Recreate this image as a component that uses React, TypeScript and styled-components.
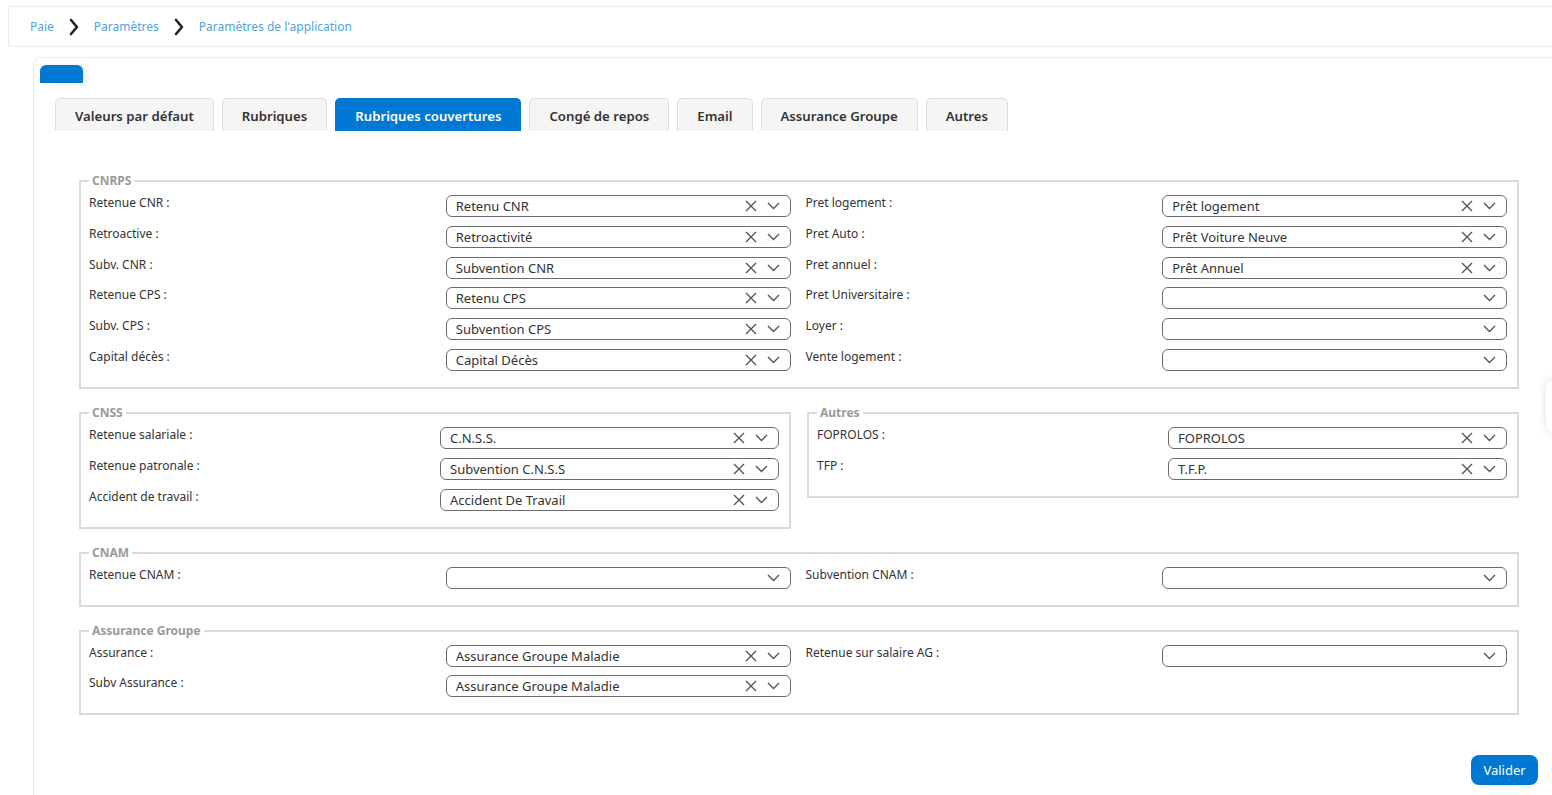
import styled, { createGlobalStyle } from "styled-components";

const GlobalStyle = createGlobalStyle`
  html, body {
    margin: 0;
    padding: 0;
    background: #ffffff;
    overflow: hidden;
  }
  body {
    font-family: "Segoe UI", "Noto Sans", "Open Sans", sans-serif;
    color: #333333;
  }
  * {
    box-sizing: border-box;
  }
`;

type Field = { label: string; value?: string };

const tabs = [
  "Valeurs par défaut",
  "Rubriques",
  "Rubriques couvertures",
  "Congé de repos",
  "Email",
  "Assurance Groupe",
  "Autres",
];

const cnrpsLeft: Field[] = [
  { label: "Retenue CNR :", value: "Retenu CNR" },
  { label: "Retroactive :", value: "Retroactivité" },
  { label: "Subv. CNR :", value: "Subvention CNR" },
  { label: "Retenue CPS :", value: "Retenu CPS" },
  { label: "Subv. CPS :", value: "Subvention CPS" },
  { label: "Capital décès :", value: "Capital Décès" },
];

const cnrpsRight: Field[] = [
  { label: "Pret logement :", value: "Prêt logement" },
  { label: "Pret Auto :", value: "Prêt Voiture Neuve" },
  { label: "Pret annuel :", value: "Prêt Annuel" },
  { label: "Pret Universitaire :" },
  { label: "Loyer :" },
  { label: "Vente logement :" },
];

const cnss: Field[] = [
  { label: "Retenue salariale :", value: "C.N.S.S." },
  { label: "Retenue patronale :", value: "Subvention C.N.S.S" },
  { label: "Accident de travail :", value: "Accident De Travail" },
];

const autres: Field[] = [
  { label: "FOPROLOS :", value: "FOPROLOS" },
  { label: "TFP :", value: "T.F.P." },
];

const ChevronRight = () => (
  <svg width="12" height="18" viewBox="0 0 12 18">
    <polyline
      points="3,2 9,9 3,16"
      fill="none"
      stroke="#222"
      strokeWidth="2.6"
      strokeLinecap="round"
      strokeLinejoin="round"
    />
  </svg>
);

const ClearIcon = () => (
  <svg width="12" height="12" viewBox="0 0 12 12">
    <path d="M1 1 L11 11 M11 1 L1 11" stroke="#555" strokeWidth="1.4" fill="none" />
  </svg>
);

const CaretIcon = () => (
  <svg width="13" height="8" viewBox="0 0 13 8">
    <polyline points="1,1 6.5,6.5 12,1" fill="none" stroke="#555" strokeWidth="1.4" />
  </svg>
);

const Select = ({ value }: { value?: string }) => (
  <SelectBox>
    <SelectValue>{value}</SelectValue>
    {value && (
      <IconSlot>
        <ClearIcon />
      </IconSlot>
    )}
    <IconSlot>
      <CaretIcon />
    </IconSlot>
  </SelectBox>
);

const FieldList = ({ fields }: { fields: Field[] }) => (
  <Column>
    {fields.map((f) => (
      <Row key={f.label}>
        <Label>{f.label}</Label>
        <Select value={f.value} />
      </Row>
    ))}
  </Column>
);

const App = () => {
  return (
    <Page>
      <GlobalStyle />
      <Breadcrumb>
        <Crumb>Paie</Crumb>
        <ChevronRight />
        <Crumb>Paramètres</Crumb>
        <ChevronRight />
        <Crumb>Paramètres de l'application</Crumb>
      </Breadcrumb>

      <Card>
        <MiniTab />
        <Tabs>
          {tabs.map((t) => (
            <Tab key={t} $active={t === "Rubriques couvertures"}>
              {t}
            </Tab>
          ))}
        </Tabs>

        <Content>
          <Fieldset>
            <Legend>CNRPS</Legend>
            <Halves>
              <FieldList fields={cnrpsLeft} />
              <FieldList fields={cnrpsRight} />
            </Halves>
          </Fieldset>

          <SideBySide>
            <Fieldset>
              <Legend>CNSS</Legend>
              <FieldList fields={cnss} />
            </Fieldset>
            <Fieldset>
              <Legend>Autres</Legend>
              <FieldList fields={autres} />
            </Fieldset>
          </SideBySide>

          <Fieldset>
            <Legend>CNAM</Legend>
            <Halves>
              <FieldList fields={[{ label: "Retenue CNAM :" }]} />
              <FieldList fields={[{ label: "Subvention CNAM :" }]} />
            </Halves>
          </Fieldset>

          <Fieldset>
            <Legend>Assurance Groupe</Legend>
            <Halves>
              <FieldList
                fields={[
                  { label: "Assurance :", value: "Assurance Groupe Maladie" },
                  { label: "Subv Assurance :", value: "Assurance Groupe Maladie" },
                ]}
              />
              <FieldList fields={[{ label: "Retenue sur salaire AG :" }]} />
            </Halves>
          </Fieldset>
        </Content>

        <Footer>
          <SubmitButton>Valider</SubmitButton>
        </Footer>
      </Card>
      <EdgeWidget />
    </Page>
  );
};

export default App;

const Page = styled.div`
  padding: 6px 0 0 8px;
  height: 100vh;
  display: flex;
  flex-direction: column;
`;

const Breadcrumb = styled.div`
  height: 41px;
  border: 1px solid #ebebeb;
  border-right: none;
  border-radius: 3px 0 0 3px;
  display: flex;
  align-items: center;
  gap: 14px;
  padding-left: 21px;
`;

const Crumb = styled.span`
  font-size: 12px;
  color: #4fa3e3;
`;

const Card = styled.div`
  margin: 10px 0 0 25px;
  flex: 1;
  border: 1px solid #ececec;
  border-right: none;
  border-bottom: none;
  border-radius: 9px 0 0 0;
  padding: 7px 0 0 6px;
`;

const MiniTab = styled.div`
  width: 43px;
  height: 18px;
  background: #0078d4;
  border-radius: 6px 6px 0 0;
  box-shadow: 4px 0 6px rgba(0, 0, 0, 0.08);
`;

const Tabs = styled.div`
  display: flex;
  gap: 8px;
  margin: 15px 0 0 15px;
`;

const Tab = styled.div<{ $active?: boolean }>`
  height: 33px;
  padding: 1px 19px 0;
  display: flex;
  align-items: center;
  font-size: 13.2px;
  font-weight: 600;
  border: 1px solid ${(p) => (p.$active ? "#0078d4" : "#dddddd")};
  border-bottom: none;
  border-radius: 5px 5px 0 0;
  background: ${(p) => (p.$active ? "#0078d4" : "#f5f5f5")};
  color: ${(p) => (p.$active ? "#ffffff" : "#333333")};
`;

const Content = styled.div`
  margin: 42px 33px 0 39px;
  display: flex;
  flex-direction: column;
  gap: 16px;
`;

const Fieldset = styled.fieldset`
  margin: 0;
  min-width: 0;
  border: 2px solid #dadada;
  padding: 6px 10px 16px 8px;
`;

const Legend = styled.legend`
  padding: 0 3px;
  font-size: 12px;
  font-weight: 700;
  color: #9a9a9a;
  line-height: 16px;
`;

const Halves = styled.div`
  display: grid;
  grid-template-columns: 1fr 1fr;
  column-gap: 15px;
`;

const SideBySide = styled.div`
  display: grid;
  grid-template-columns: 1fr 1fr;
  column-gap: 16px;
  align-items: start;
`;

const Column = styled.div`
  display: flex;
  flex-direction: column;
  gap: 8.8px;
`;

const Row = styled.div`
  display: grid;
  grid-template-columns: 1fr 1fr;
  column-gap: 12px;
  align-items: start;
`;

const Label = styled.div`
  font-size: 12px;
  line-height: 16px;
  color: #333333;
`;

const SelectBox = styled.div`
  height: 22px;
  border: 1px solid #6b6b6b;
  border-radius: 6px;
  display: flex;
  align-items: center;
  padding: 0 10px 0 9px;
  gap: 10px;
  background: #fff;
`;

const SelectValue = styled.span`
  flex: 1;
  font-size: 13px;
  color: #333333;
  white-space: nowrap;
  overflow: hidden;
`;

const IconSlot = styled.span`
  display: flex;
  align-items: center;
`;

const Footer = styled.div`
  display: flex;
  justify-content: flex-end;
  padding: 40px 14px 0 0;
`;

const SubmitButton = styled.button`
  height: 30px;
  width: 67px;
  border: none;
  border-radius: 8px;
  background: #0078d4;
  color: #ffffff;
  font-family: inherit;
  font-size: 13px;
`;

const EdgeWidget = styled.div`
  position: fixed;
  right: -34px;
  top: 380px;
  width: 40px;
  height: 52px;
  border-radius: 8px;
  background: #fff;
  box-shadow: 0 0 10px rgba(0, 0, 0, 0.12);
`;
